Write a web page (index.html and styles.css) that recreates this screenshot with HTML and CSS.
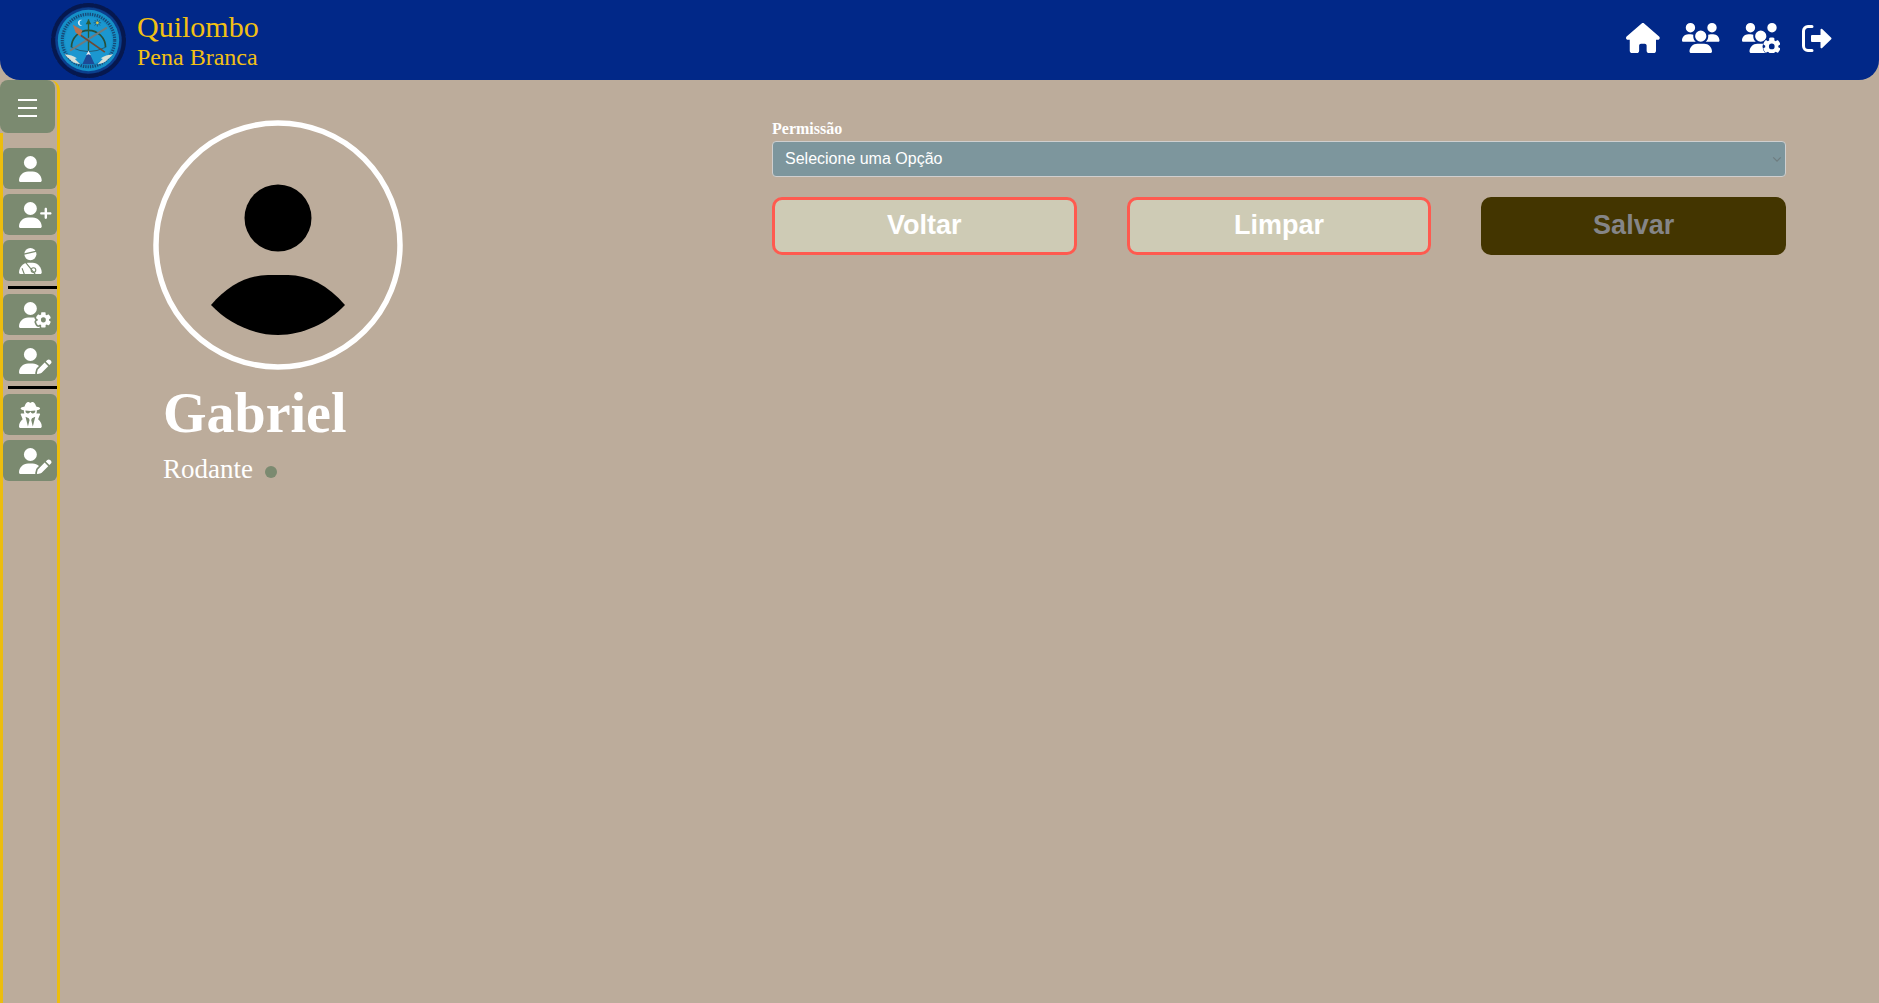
FILE: index.html
```html
<!DOCTYPE html>
<html lang="pt-BR">
<head>
<meta charset="utf-8">
<title>Quilombo Pena Branca</title>
<link rel="stylesheet" href="styles.css">
</head>
<body>
<header class="topbar">
  <div class="brand">
    <svg class="logo" viewBox="36 10 220 220" aria-hidden="true">
      <circle cx="146" cy="120" r="104" fill="#0a2a6e"/>
      <circle cx="146" cy="120" r="104" fill="none" stroke="#06184f" stroke-width="12" stroke-dasharray="26 8" stroke-linecap="round"/>
      <circle cx="146" cy="120" r="97" fill="#0b3f8e"/>
      <circle cx="146" cy="120" r="90" fill="#1590c8"/>
      <circle cx="146" cy="120" r="77" fill="none" stroke="#174a78" stroke-width="9" stroke-dasharray="4 3"/>
      <circle cx="146" cy="120" r="69" fill="#1b97d0"/>
      <path d="M96 140 A50 50 0 0 1 196 140" fill="none" stroke="#27503a" stroke-width="5"/>
      <path d="M96 140 Q146 165 196 140" fill="none" stroke="#24404a" stroke-width="2"/>
      <path d="M146 58 V150" stroke="#2c5a34" stroke-width="4"/>
      <path d="M138 72 L146 58 L154 72Z" fill="#2c5a34"/>
      <path d="M200 82 L92 150" stroke="#6f7a7c" stroke-width="6"/>
      <path d="M122 104 L194 154" stroke="#6e4a35" stroke-width="5"/>
      <path d="M100 74 L128 90 L122 108 L108 96Z" fill="#b8704f"/>
      <path d="M172 57 V79 M161 68 H183 M164 60 L180 76 M180 60 L164 76" stroke="#1c2f4a" stroke-width="1.5"/>
      <circle cx="172" cy="68" r="4" fill="#e0c848"/>
      <path d="M128 60 A9 9 0 1 0 128 76 A7 7 0 1 1 128 60Z" fill="#dff0f6"/>
      <path d="M146 150 L128 190 L164 190Z" fill="#1d4a96"/>
      <path d="M146 150 L139 163 L146 160 L153 163Z" fill="#e8eef2"/>
      <path d="M76 160 Q98 162 112 172 L106 174 L122 190 Q98 186 92 176 Q84 170 76 160Z" fill="#d5e0d8"/>
      <path d="M218 160 Q196 162 182 172 L188 174 L172 190 Q196 186 202 176 Q210 170 218 160Z" fill="#d5e0d8"/>
    </svg>
    <div class="brand-text">
      <span class="brand-name">Quilombo</span>
      <span class="brand-sub">Pena Branca</span>
    </div>
  </div>
  <nav class="topnav">
    <a class="topnav-link" href="#"><svg class="nav-icon" viewBox="0 0 576 512"><path d="M575.8 255.5c0 18-15 32.1-32 32.1h-32l.7 160.2c0 2.7-.2 5.4-.5 8.1V472c0 22.1-17.9 40-40 40H456c-1.1 0-2.2 0-3.3-.1c-1.4 .1-2.8 .1-4.2 .1H416 392c-22.1 0-40-17.9-40-40V448 384c0-17.7-14.3-32-32-32H256c-17.7 0-32 14.3-32 32v64 24c0 22.1-17.9 40-40 40H160 128.1c-1.5 0-3-.1-4.5-.2c-1.2 .1-2.4 .2-3.6 .2H104c-22.1 0-40-17.9-40-40V360c0-.9 0-1.9 .1-2.8V287.6H32c-18 0-32-14-32-32.1c0-9 3-17 10-24L266.4 8c7-7 15-8 22-8s15 2 21 7L564.8 231.5c8 7 12 15 11 24z"/></svg></a>
    <a class="topnav-link" href="#"><svg class="nav-icon" viewBox="0 0 640 512"><path d="M144 0a80 80 0 1 1 0 160A80 80 0 1 1 144 0zM512 0a80 80 0 1 1 0 160A80 80 0 1 1 512 0zM0 298.7C0 239.8 47.8 192 106.7 192h42.7c15.9 0 31 3.5 44.6 9.7c-1.3 7.2-1.9 14.7-1.9 22.3c0 38.2 16.8 72.5 43.3 96c-.2 0-.4 0-.7 0H21.3C9.6 320 0 310.4 0 298.7zM405.3 320c-.2 0-.4 0-.7 0c26.6-23.5 43.3-57.8 43.3-96c0-7.6-.7-15-1.9-22.3c13.6-6.3 28.7-9.7 44.6-9.7h42.7C592.2 192 640 239.8 640 298.7c0 11.8-9.6 21.3-21.3 21.3H405.3zM224 224a96 96 0 1 1 192 0 96 96 0 1 1 -192 0zM128 485.3C128 411.7 187.7 352 261.3 352H378.7C452.3 352 512 411.7 512 485.3c0 14.7-11.9 26.7-26.7 26.7H154.7c-14.7 0-26.7-11.9-26.7-26.7z"/></svg></a>
    <a class="topnav-link" href="#"><svg class="nav-icon" viewBox="0 0 640 512"><path d="M144 0a80 80 0 1 1 0 160A80 80 0 1 1 144 0zM512 0a80 80 0 1 1 0 160A80 80 0 1 1 512 0zM0 298.7C0 239.8 47.8 192 106.7 192h42.7c15.9 0 31 3.5 44.6 9.7c-1.3 7.2-1.9 14.7-1.9 22.3c0 38.2 16.8 72.5 43.3 96c-.2 0-.4 0-.7 0H21.3C9.6 320 0 310.4 0 298.7zM224 224a96 96 0 1 1 192 0 96 96 0 1 1 -192 0zM128 485.3C128 411.7 187.7 352 261.3 352H378.7C452.3 352 512 411.7 512 485.3c0 14.7-11.9 26.7-26.7 26.7H154.7c-14.7 0-26.7-11.9-26.7-26.7z"/><g transform="translate(28 48)"><circle class="gear-cut" cx="480" cy="352" r="158"/><path fill-rule="evenodd" d="M436 218.2c0-7 4.5-13.3 11.3-14.8c10.5-2.4 21.5-3.7 32.7-3.7s22.2 1.3 32.7 3.7c6.8 1.5 11.3 7.8 11.3 14.8v30.6c7.9 3.4 15.4 7.7 22.3 12.8l24.9-14.3c6.1-3.5 13.7-2.7 18.5 2.4c7.6 8.1 14.3 17.2 20.1 27.2s10.3 20.4 13.5 31c2.1 6.7-1.1 13.7-7.2 17.2l-25 14.4c.4 4 .7 8.1 .7 12.3s-.2 8.2-.7 12.3l25 14.4c6.1 3.5 9.2 10.5 7.2 17.2c-3.3 10.6-7.8 21-13.5 31s-12.5 19.1-20.1 27.2c-4.8 5.1-12.5 5.9-18.5 2.4l-24.9-14.3c-6.9 5.1-14.3 9.4-22.3 12.8l0 30.6c0 7-4.5 13.3-11.3 14.8c-10.5 2.4-21.5 3.7-32.7 3.7s-22.2-1.3-32.7-3.7c-6.8-1.5-11.3-7.8-11.3-14.8V454.8c-8-3.4-15.6-7.7-22.5-12.9l-24.7 14.3c-6.1 3.5-13.7 2.7-18.5-2.4c-7.6-8.1-14.3-17.2-20.1-27.2s-10.3-20.4-13.5-31c-2.1-6.7 1.1-13.7 7.2-17.2l24.8-14.3c-.4-4.1-.7-8.2-.7-12.4s.2-8.3 .7-12.4L343.8 325c-6.1-3.5-9.2-10.5-7.2-17.2c3.3-10.6 7.7-21 13.5-31s12.5-19.1 20.1-27.2c4.8-5.1 12.4-5.9 18.5-2.4l24.8 14.3c6.9-5.1 14.5-9.4 22.5-12.9V218.2zm92.1 133.5a48.1 48.1 0 1 0 -96.1 0 48.1 48.1 0 1 0 96.1 0z"/></g></svg></a>
    <a class="topnav-link" href="#"><svg class="nav-exit" viewBox="0 0 30 27"><path class="exit-bracket" d="M10 1.5H6A4.5 4.5 0 0 0 1.5 6V21A4.5 4.5 0 0 0 6 25.5H10"/><path class="exit-arrow" d="M10 11H19.5V4.8L28.5 13.5L19.5 22.2V16H10Z"/></svg></a>
  </nav>
</header>

<div class="layout">
  <aside class="sidebar">
    <button class="menu-toggle" type="button" aria-label="Menu"><span></span><span></span><span></span></button>
    <div class="side-menu">
      <a class="side-btn" href="#"><svg class="side-icon" viewBox="0 0 448 512"><path d="M224 256A128 128 0 1 0 224 0a128 128 0 1 0 0 256zm-45.7 48C79.8 304 0 383.8 0 482.3C0 498.7 13.3 512 29.7 512H418.3c16.4 0 29.7-13.3 29.7-29.7C448 383.8 368.2 304 269.7 304H178.3z"/></svg></a>
      <a class="side-btn" href="#"><svg class="side-icon" viewBox="0 0 640 512"><path d="M96 128a128 128 0 1 1 256 0A128 128 0 1 1 96 128zM0 482.3C0 383.8 79.8 304 178.3 304h91.4C368.2 304 448 383.8 448 482.3c0 16.4-13.3 29.7-29.7 29.7H29.7C13.3 512 0 498.7 0 482.3zM504 312V248H440c-13.3 0-24-10.7-24-24s10.7-24 24-24h64V136c0-13.3 10.7-24 24-24s24 10.7 24 24v64h64c13.3 0 24 10.7 24 24s-10.7 24-24 24H552v64c0 13.3-10.7 24-24 24s-24-10.7-24-24z"/></svg></a>
      <a class="side-btn" href="#"><svg class="side-icon" viewBox="0 0 448 512"><circle cx="224" cy="120" r="120"/><path class="icon-cut" d="M95 120L350 62" stroke-width="28"/><path d="M0 482.3C0 383.8 79.8 290 178.3 290h91.4C368.2 290 448 383.8 448 482.3c0 16.4-13.3 29.7-29.7 29.7H29.7C13.3 512 0 498.7 0 482.3z"/><path class="icon-cut" d="M130 285L330 530M110 530L60 400" stroke-width="22"/><circle class="icon-ring" cx="285" cy="435" r="46" stroke-width="22"/></svg></a>
      <hr class="side-rule">
      <a class="side-btn" href="#"><svg class="side-icon" viewBox="0 0 640 512"><path fill-rule="evenodd" d="M224 0a128 128 0 1 1 0 256A128 128 0 1 1 224 0zM178.3 304h91.4c11.8 0 23.4 1.2 34.5 3.3c-2.1 18.5 7.4 35.6 21.8 44.8c-16.6 10.6-26.7 31.6-20 53.3c4 12.9 9.4 25.5 16.4 37.6s15.2 23.1 24.4 33c15.7 16.9 39.6 18.4 57.2 8.7v.9c0 9.2 2.7 18.5 7.9 26.3H29.7C13.3 512 0 498.7 0 482.3C0 383.8 79.8 304 178.3 304zM436 218.2c0-7 4.5-13.3 11.3-14.8c10.5-2.4 21.5-3.7 32.7-3.7s22.2 1.3 32.7 3.7c6.8 1.5 11.3 7.8 11.3 14.8v30.6c7.9 3.4 15.4 7.7 22.3 12.8l24.9-14.3c6.1-3.5 13.7-2.7 18.5 2.4c7.6 8.1 14.3 17.2 20.1 27.2s10.3 20.4 13.5 31c2.1 6.7-1.1 13.7-7.2 17.2l-25 14.4c.4 4 .7 8.1 .7 12.3s-.2 8.2-.7 12.3l25 14.4c6.1 3.5 9.2 10.5 7.2 17.2c-3.3 10.6-7.8 21-13.5 31s-12.5 19.1-20.1 27.2c-4.8 5.1-12.5 5.9-18.5 2.4l-24.9-14.3c-6.9 5.1-14.3 9.4-22.3 12.8l0 30.6c0 7-4.5 13.3-11.3 14.8c-10.5 2.4-21.5 3.7-32.7 3.7s-22.2-1.3-32.7-3.7c-6.8-1.5-11.3-7.8-11.3-14.8V454.8c-8-3.4-15.6-7.7-22.5-12.9l-24.7 14.3c-6.1 3.5-13.7 2.7-18.5-2.4c-7.6-8.1-14.3-17.2-20.1-27.2s-10.3-20.4-13.5-31c-2.1-6.7 1.1-13.7 7.2-17.2l24.8-14.3c-.4-4.1-.7-8.2-.7-12.4s.2-8.3 .7-12.4L343.8 325c-6.1-3.5-9.2-10.5-7.2-17.2c3.3-10.6 7.7-21 13.5-31s12.5-19.1 20.1-27.2c4.8-5.1 12.4-5.9 18.5-2.4l24.8 14.3c6.9-5.1 14.5-9.4 22.5-12.9V218.2zm92.1 133.5a48.1 48.1 0 1 0 -96.1 0 48.1 48.1 0 1 0 96.1 0z"/></svg></a>
      <a class="side-btn" href="#"><svg class="side-icon" viewBox="0 0 640 512"><path d="M224 256A128 128 0 1 0 224 0a128 128 0 1 0 0 256zm-45.7 48C79.8 304 0 383.8 0 482.3C0 498.7 13.3 512 29.7 512H322.8c-3.1-8.8-3.7-18.4-1.4-27.8l15-60.1c2.8-11.3 8.6-21.5 16.8-29.7l40.3-40.3c-32.1-31-75.7-50.1-123.9-50.1H178.3zm435.5-68.3c-15.6-15.6-40.9-15.6-56.6 0l-29.4 29.4 71 71 29.4-29.4c15.6-15.6 15.6-40.9 0-56.6l-14.4-14.4zM375.9 417c-4.1 4.1-7 9.2-8.4 14.9l-15 60.1c-1.4 5.5 .2 11.2 4.2 15.2s9.7 5.6 15.2 4.2l60.1-15c5.6-1.4 10.8-4.3 14.9-8.4L576.1 358.7l-71-71L375.9 417z"/></svg></a>
      <hr class="side-rule">
      <a class="side-btn" href="#"><svg class="side-icon" viewBox="0 0 448 512"><path d="M224 16c-6.7 0-10.8-2.8-15.5-6.1C201.9 5.4 194 0 176 0c-30.5 0-52 43.7-66 89.4C62.7 98.1 32 112.2 32 128c0 14.3 25 27.1 64.6 35.9c-.4 4-.6 8-.6 12.1c0 17 3.3 33.2 9.3 48H45.4C38 224 32 230 32 237.4c0 1.7 .3 3.4 1 5l38.8 96.9C28.2 371.8 0 423.8 0 482.3C0 498.7 13.3 512 29.7 512H418.3c16.4 0 29.7-13.3 29.7-29.7c0-58.5-28.2-110.4-71.7-143L415 242.4c.6-1.6 1-3.3 1-5c0-7.4-6-13.4-13.4-13.4H342.7c6-14.8 9.3-31 9.3-48c0-4.1-.2-8.1-.6-12.1C391 155.1 416 142.3 416 128c0-15.8-30.7-29.9-78-38.6C324 43.7 302.5 0 272 0c-18 0-25.9 5.4-32.5 9.9c-4.8 3.3-8.8 6.1-15.5 6.1zm56 208H267.6c-16.5 0-31.1-10.6-36.3-26.2c-2.3-7-12.2-7-14.5 0c-5.2 15.6-19.9 26.2-36.3 26.2H168c-22.1 0-40-17.9-40-40V169.6c28.2 4.1 61 6.4 96 6.4s67.8-2.3 96-6.4V184c0 22.1-17.9 40-40 40zm-88 96l16 32L176 480 128 288l64 32zm128-32L272 480 240 352l16-32 64-32z"/></svg></a>
      <a class="side-btn" href="#"><svg class="side-icon" viewBox="0 0 640 512"><path d="M224 256A128 128 0 1 0 224 0a128 128 0 1 0 0 256zm-45.7 48C79.8 304 0 383.8 0 482.3C0 498.7 13.3 512 29.7 512H322.8c-3.1-8.8-3.7-18.4-1.4-27.8l15-60.1c2.8-11.3 8.6-21.5 16.8-29.7l40.3-40.3c-32.1-31-75.7-50.1-123.9-50.1H178.3zm435.5-68.3c-15.6-15.6-40.9-15.6-56.6 0l-29.4 29.4 71 71 29.4-29.4c15.6-15.6 15.6-40.9 0-56.6l-14.4-14.4zM375.9 417c-4.1 4.1-7 9.2-8.4 14.9l-15 60.1c-1.4 5.5 .2 11.2 4.2 15.2s9.7 5.6 15.2 4.2l60.1-15c5.6-1.4 10.8-4.3 14.9-8.4L576.1 358.7l-71-71L375.9 417z"/></svg></a>
    </div>
  </aside>

  <main class="content">
    <section class="profile">
      <svg class="avatar" viewBox="0 0 250 250" aria-hidden="true">
        <circle class="avatar-ring" cx="125" cy="125" r="122"/>
        <circle cx="125" cy="98" r="33.5"/>
        <path d="M58 185C75 165 95 155 115 155H135C155 155 175 165 192 185C175 203 150 215 125 215C100 215 75 203 58 185Z"/>
      </svg>
      <h1 class="profile-name">Gabriel</h1>
      <p class="profile-role">Rodante <span class="status-dot"></span></p>
    </section>

    <form class="perm-form">
      <label class="field-label" for="permissao">Permissão</label>
      <div class="select-wrap">
        <select class="field-select" id="permissao">
          <option>Selecione uma Opção</option>
        </select>
        <svg class="select-chevron" viewBox="0 0 12 8"><path d="M1.5 1.5L6 6L10.5 1.5"/></svg>
      </div>
      <div class="actions">
        <button class="btn btn-outline" type="button">Voltar</button>
        <button class="btn btn-outline" type="button">Limpar</button>
        <button class="btn btn-disabled" type="button">Salvar</button>
      </div>
    </form>
  </main>
</div>
</body>
</html>
```

FILE: styles.css
```css
* {
  box-sizing: border-box;
}

html,
body {
  height: 100%;
  margin: 0;
}

body {
  display: flex;
  flex-direction: column;
  overflow: hidden;
  background: #bcac9b;
  font-family: "Liberation Serif", serif;
  color: #fff;
}

/* Top bar */
.topbar {
  flex: none;
  height: 80px;
  display: flex;
  align-items: center;
  justify-content: space-between;
  padding: 0 47px 0 51px;
  background: #012888;
  border-radius: 0 0 20px 20px;
}

.brand {
  display: flex;
  align-items: center;
  gap: 11px;
}

.logo {
  width: 75px;
  height: 75px;
  display: block;
}

.brand-text {
  display: flex;
  flex-direction: column;
  color: #f2c014;
  margin-top: -1px;
}

.brand-name {
  font-size: 30px;
  line-height: 34px;
}

.brand-sub {
  font-size: 24px;
  line-height: 26px;
}

.topnav {
  display: flex;
  align-items: center;
  gap: 22.5px;
  padding-bottom: 4px;
}

.topnav-link {
  display: block;
  line-height: 0;
}

.nav-icon {
  height: 30px;
  width: auto;
  fill: #fff;
  display: block;
}

.gear-cut {
  fill: #012888;
}

.nav-exit {
  width: 30px;
  height: 27px;
  display: block;
}

.exit-bracket {
  fill: none;
  stroke: #fff;
  stroke-width: 3;
  stroke-linecap: round;
}

.exit-arrow {
  fill: #fff;
  stroke: #fff;
  stroke-width: 2;
  stroke-linejoin: round;
}

/* Layout */
.layout {
  flex: 1;
  min-height: 0;
  display: flex;
}

.sidebar {
  flex: none;
  width: 60px;
  display: flex;
  flex-direction: column;
  border-right: 3px solid #ecbd0f;
  border-top-right-radius: 10px;
}

.menu-toggle {
  flex: none;
  width: 55px;
  height: 53px;
  display: flex;
  flex-direction: column;
  align-items: center;
  justify-content: center;
  gap: 6px;
  padding: 3px 0 0;
  border: 0;
  background: #7b8a70;
  border-radius: 8px;
}

.menu-toggle span {
  display: block;
  width: 19px;
  height: 2px;
  background: #fff;
}

.side-menu {
  flex: 1;
  display: flex;
  flex-direction: column;
  gap: 5px;
  padding-top: 15px;
  border-left: 3px solid #ecbd0f;
}

.side-btn {
  flex: none;
  width: 54px;
  height: 41px;
  display: flex;
  align-items: center;
  padding-left: 16px;
  background: #7b8a70;
  border-radius: 6px;
}

.side-icon {
  height: 26px;
  width: auto;
  fill: #fff;
  display: block;
}

.icon-cut {
  fill: none;
  stroke: #7b8a70;
}

.icon-ring {
  fill: none;
  stroke: #7b8a70;
}

.side-rule {
  width: 49px;
  height: 3px;
  margin: 0 0 0 5px;
  border: 0;
  background: #000;
}

/* Content */
.content {
  flex: 1;
  min-width: 0;
  display: grid;
  grid-template-columns: 619px 1fr;
  align-content: start;
  padding: 40px 93px 0 93px;
}

.avatar {
  width: 250px;
  height: 250px;
  display: block;
}

.avatar-ring {
  fill: none;
  stroke: #fff;
  stroke-width: 5.5;
}

.profile-name {
  margin: 11px 0 0 10px;
  font-size: 56px;
  font-weight: 700;
  line-height: 64px;
}

.profile-role {
  display: flex;
  align-items: center;
  margin: 9px 0 0 10px;
  font-size: 27px;
  line-height: 31px;
}

.status-dot {
  width: 12px;
  height: 12px;
  margin: 5px 0 0 12px;
  border-radius: 50%;
  background: #7b8a70;
}

.perm-form {
  display: flex;
  flex-direction: column;
}

.field-label {
  font-size: 16px;
  font-weight: 700;
  line-height: 18px;
  margin-bottom: 3px;
}

.select-wrap {
  position: relative;
}

.field-select {
  display: block;
  width: 100%;
  height: 36px;
  padding: 0 30px 2px 12px;
  appearance: none;
  border: 1px solid #cfcfcf;
  border-radius: 4px;
  background: #7d969d;
  color: #fff;
  font-family: "Liberation Sans", sans-serif;
  font-size: 16px;
}

.select-chevron {
  position: absolute;
  top: 15px;
  right: 4px;
  width: 10px;
  height: 7px;
  fill: none;
  stroke: #6f7d80;
  stroke-width: 1.5;
}

.actions {
  display: grid;
  grid-template-columns: repeat(3, 1fr);
  gap: 50px;
  margin-top: 20px;
}

.btn {
  height: 58px;
  padding: 0 0 2px;
  border-radius: 10px;
  font-family: "Liberation Sans", sans-serif;
  font-size: 27px;
  font-weight: 700;
}

.btn-outline {
  border: 3px solid #ff5a4f;
  background: #cecbb5;
  color: #fff;
}

.btn-disabled {
  border: 0;
  background: #433500;
  color: #858587;
}
```
